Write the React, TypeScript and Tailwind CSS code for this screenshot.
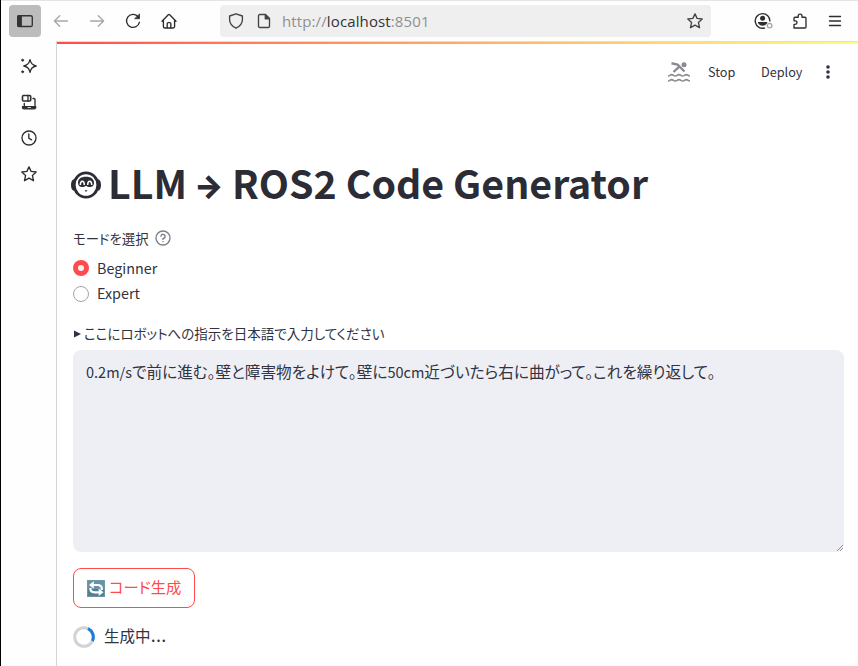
import type { ReactNode } from "react";

const JP = "font-['Noto_Sans_CJK_JP',sans-serif]";

function Icon({ size = 16, className = "", children }: { size?: number; className?: string; children: ReactNode }) {
  return (
    <svg
      width={size}
      height={size}
      viewBox={`0 0 ${size} ${size}`}
      fill="none"
      stroke="currentColor"
      strokeWidth={1.35}
      strokeLinecap="round"
      strokeLinejoin="round"
      className={`block shrink-0 ${className}`}
    >
      {children}
    </svg>
  );
}

const STAR = "M8 .9 L10.1 5.4 L15.2 6 L11.4 9.4 L12.5 14.7 L8 12.2 L3.5 14.7 L4.6 9.4 L.8 6 L5.9 5.4 Z";

function Toolbar() {
  return (
    <header className="flex h-[41px] shrink-0 items-center border-t border-[#e4e4e4] bg-[#fefefe] pl-2 text-[#2e2e2e]">
      <div className="flex h-8 w-8 items-center justify-center rounded-[4px] bg-[#bcbcbc]">
        <Icon className="text-[#333]">
          <rect x=".7" y="2.7" width="14.6" height="10.8" rx="1.6" />
          <path d="M1 3h3.200v10.200H1z" fill="currentColor" />
        </Icon>
      </div>
      <Icon className="ml-3 text-[#a8a8a8]"><path d="M14.400 8H1.500M6.700 2.700L1.400 8l5.300 5.300" /></Icon>
      <Icon className="ml-5 text-[#a8a8a8]"><path d="M1.600 8h12.900M9.300 2.700L14.600 8l-5.300 5.300" /></Icon>
      <Icon className="ml-5">
        <path d="M14.400 9.300A6.500 6.500 0 1 1 12.700 3.300" />
        <path d="M14.500 1.300v4.400H10z" fill="currentColor" strokeWidth=".8" />
      </Icon>
      <Icon className="ml-5">
        <path d="M1 8.200L7.300 1.700a1 1 0 0 1 1.400 0L15 8.200M2.400 7v6.500a1.500 1.500 0 0 0 1.500 1.500h8.200a1.500 1.500 0 0 0 1.500-1.500V7" />
        <path d="M6.200 14.800V10.600a1 1 0 0 1 1-1h1.600a1 1 0 0 1 1 1v4.200" />
      </Icon>
      <div className="ml-[43px] flex h-8 w-[491px] items-center rounded-[4px] bg-[#efefef] pl-2 pr-2 text-[#444]">
        <Icon><path d="M8 .8L14.400 3v3.800c0 3.700-2 6.300-6.400 8.400-4.400-2.100-6.400-4.700-6.400-8.400V3z" /></Icon>
        <Icon className="ml-3">
          <path d="M3.800 1.500h5.700l4 4v7.700a1.300 1.300 0 0 1-1.300 1.300H3.800a1.300 1.300 0 0 1-1.300-1.300V2.800a1.300 1.300 0 0 1 1.300-1.300z" />
          <path d="M9.300 1.700v4h4z" fill="currentColor" />
        </Icon>
        <div className="-mt-px ml-[10px] w-[148px] whitespace-nowrap font-['Open_Sans',sans-serif] text-[15px] leading-[20px] tracking-[0.12px] text-[#909090]">
          http://<span className="text-[#333]">localhost</span>:8501
        </div>
        <Icon className="ml-auto"><path d={STAR} /></Icon>
      </div>
      <svg width="19" height="18" viewBox="0 0 19 18" fill="none" stroke="#2e2e2e" strokeWidth="1.4" className="ml-[43px] block shrink-0">
        <path d="M11 15.800A7.300 7.300 0 1 1 15.800 9.500" />
        <circle cx="8.600" cy="6.300" r="2.500" fill="#2e2e2e" stroke="none" />
        <path d="M3.800 10h9.600c-.5 2.600-2.600 3.800-4.800 3.800S4.300 12.600 3.800 10z" fill="#2e2e2e" stroke="none" />
        <circle cx="15.600" cy="13.600" r="2.300" stroke="#a5a5a5" fill="#fefefe" strokeWidth="1.300" />
      </svg>
      <Icon className="ml-[19px]">
        <path d="M2 15V11.400h1.200a1.800 1.800 0 0 0 0-3.600H2V5.200a1 1 0 0 1 1-1h3.200V3a1.900 1.900 0 0 1 3.800 0v1.200h3a1 1 0 0 1 1 1V14a1 1 0 0 1-1 1z" />
      </Icon>
      <Icon className="ml-[19px]"><path d="M2.500 3.500h11M2.500 8h11M2.500 12.500h11" /></Icon>
    </header>
  );
}

function Sidebar() {
  return (
    <aside className="flex w-[56px] shrink-0 flex-col items-center gap-5 border-r border-[#d5d5d5] bg-[#fefefe] pt-[17px] text-[#2e2e2e]">
      <Icon>
        <path d="M9 1.700C9.700 5.500 11 7.300 15.200 8 11 8.700 9.700 10.500 9 14.300 8.300 10.500 7 8.700 2.800 8 7 7.300 8.300 5.500 9 1.700z" />
        <circle cx="1.600" cy="2.200" r="1" fill="currentColor" strokeWidth=".8" />
        <circle cx="1.600" cy="13.800" r="1" fill="currentColor" strokeWidth=".8" />
      </Icon>
      <Icon>
        <rect x="1.500" y="1.500" width="8.200" height="5.500" rx="1" strokeWidth="1.600" />
        <path d="M7 1.500V7M12 4.500h1a1 1 0 0 1 1 1v6M3.300 9.500v2" />
        <path d="M1.500 12.600h13.200v.7a1.500 1.500 0 0 1-1.500 1.500H3a1.500 1.500 0 0 1-1.500-1.500z" fill="currentColor" />
        <path d="M7 13.500h2.500" stroke="#fff" strokeWidth=".8" />
      </Icon>
      <Icon><circle cx="8" cy="8" r="7" /><path d="M7.800 4v4.200l2.800 1.600" /></Icon>
      <Icon><path d={STAR} /></Icon>
    </aside>
  );
}

function Swimmer() {
  return (
    <svg width="24" height="24" viewBox="0 0 24 24" fill="none" stroke="#8a8b90" strokeWidth="1.700" className="block">
      <circle cx="17" cy="4.700" r="2.500" fill="#8a8b90" stroke="none" />
      <path d="M4.500 3.300L10.500 4.500 17.500 11.500M12 6.800L6.500 12" strokeWidth="2.400" />
      <path d="M1 16c1.900 0 1.900-1.300 3.700-1.300S6.500 16 8.300 16s1.900-1.300 3.700-1.300 1.900 1.300 3.700 1.300 1.900-1.300 3.700-1.300S21.200 16 23 16" />
      <path d="M1 21c1.900 0 1.900-1.300 3.700-1.300S6.500 21 8.300 21s1.900-1.300 3.700-1.300 1.900 1.300 3.700 1.300 1.900-1.300 3.700-1.300S21.200 21 23 21" />
    </svg>
  );
}

function Robot() {
  return (
    <svg width="30" height="28" viewBox="0 0 30 28" className="block shrink-0">
      <path d="M3.500 8C.8 8.600 0 11 0 14s.8 5.400 3.500 6zM26.500 8c2.700.6 3.500 3 3.500 6s-.8 5.400-3.500 6z" fill="#2b2c36" />
      <ellipse cx="15" cy="14" rx="11.800" ry="12.200" fill="#fff" stroke="#2b2c36" strokeWidth="2.800" />
      <path d="M7 11.800C7 7.800 10 5.700 15 5.700s8 2.100 8 6.100c0 5.200-5.500 4.800-8 3-2.500 1.800-8 2.200-8-3z" fill="#2b2c36" />
      <path d="M9.300 14c0-5 4-5 4 0M16.700 14c0-5 4-5 4 0" fill="none" stroke="#fff" strokeWidth="1.500" />
      <path d="M13.500 19.300h3L15 21z" fill="#2b2c36" />
    </svg>
  );
}

function Refresh() {
  return (
    <svg width="18" height="17" viewBox="0 0 18 17" className="block shrink-0">
      <rect width="18" height="17" rx="1" fill="#6693a7" />
      <rect y="9" width="18" height="8" rx="1" fill="#547f93" />
      <rect x=".5" y=".5" width="17" height="16" fill="none" stroke="#7299aa" strokeWidth=".8" />
      <g fill="none" stroke="#fff" strokeWidth="2.200">
        <path d="M6 5h4.500q4.300 0 4.300 3.800V10" />
        <path d="M12 12.300H7.700q-4.300 0-4.300-3.800V8" />
      </g>
      <path d="M2 5l4.800-3.800v7.600zM16.500 12.300l-4.800-3.800v7.600z" fill="#fff" />
    </svg>
  );
}

function App() {
  return (
    <div className={`flex h-[666px] w-[858px] flex-col overflow-hidden border-l border-black bg-white text-[#31333f] ${JP}`}>
      <Toolbar />
      <div className="flex min-h-0 flex-1">
        <Sidebar />
        <main className="flex min-w-0 flex-1 flex-col border-t border-[#dedede]">
          <div className="h-[2px] shrink-0 bg-gradient-to-r from-[#ff4b4b] to-[#fffd80]" />
          <div className="flex h-[56px] items-center justify-end whitespace-nowrap pr-[28px] text-[12.700px]">
            <Swimmer />
            <span className="ml-[17px] w-[27px]">Stop</span>
            <span className="ml-[26px] w-[42px]">Deploy</span>
            <svg width="4" height="14" viewBox="0 0 4 14" className="ml-[23px] block" fill="#31333f">
              <circle cx="2" cy="2" r="1.800" /><circle cx="2" cy="7" r="1.800" /><circle cx="2" cy="12" r="1.800" />
            </svg>
          </div>
          <div className="flex flex-col pl-4 pr-[14px]">
            <h1 className="-ml-[2px] mt-[57px] flex h-[56px] items-center whitespace-nowrap text-[39.300px] font-bold leading-[56px] text-[#2b2c36]">
              <Robot />
              <span className="-mt-[6px] ml-[7px] w-[86px]">LLM</span>
              <span className="mt-[2px] w-[38px] font-['Inter',sans-serif] text-[31px] font-black">→</span>
              <span className="-mt-[6px]">ROS2 Code Generator</span>
            </h1>
            <div className="mt-[13px] flex h-[24px] items-center text-[13.400px] leading-[24px] [font-feature-settings:'palt']">
              <span className="w-[82px] whitespace-nowrap">モードを選択</span>
              <Icon className="text-[#7d7e87]">
                <circle cx="8" cy="8" r="7" />
                <path d="M5.900 6.200A2.100 2.100 0 1 1 8 8.500v.9M8 11.600v.1" />
              </Icon>
            </div>
            <label className="mt-[5px] flex h-[26px] items-center gap-2 text-[14.350px]">
              <span className="flex h-4 w-4 items-center justify-center rounded-full bg-[#ff4b4b]"><span className="h-[6px] w-[6px] rounded-full bg-[#f0f2f6]" /></span>
              Beginner
            </label>
            <label className="flex h-[25px] items-center gap-2 text-[14.350px]">
              <span className="h-4 w-4 rounded-full border border-[#a3a4aa]" />
              <span className="-mt-px">Expert</span>
            </label>
            <div className="mt-[15px] flex h-[24px] items-center whitespace-nowrap text-[13.500px] [font-feature-settings:'palt']">
              <svg width="8" height="8" viewBox="0 0 8 8" className="mr-[3px] mt-px"><path d="M1 .5l7 3.500-7 3.500z" fill="#31333f" /></svg>
              ここにロボットへの指示を日本語で入力してください
            </div>
            <div className="relative mt-[5px] h-[202px] rounded-lg bg-[#eeeff5] px-[13px] pt-[10px]">
              <p className="whitespace-nowrap text-[15.640px] leading-[24px] [font-feature-settings:'palt']">
                <span className="text-[14.500px]">0.2m/s</span>で前に進む。壁と障害物をよけて。壁に<span className="text-[14.500px]">50cm</span>近づいたら右に曲がって。これを繰り返して。
              </p>
              <svg width="6" height="6" viewBox="0 0 6 6" className="absolute bottom-[1px] right-[1px]" stroke="#8b8d96"><path d="M0 6L6 0M3 6L6 3" /></svg>
            </div>
            <button className="mt-4 flex h-10 w-[122px] items-center gap-[4px] whitespace-nowrap rounded-lg border border-[#ff4b4b] pl-[13px] text-[15.300px] text-[#ff4b4b] [font-feature-settings:'palt']">
              <Refresh />
              <span className="-mt-[4px]">コード生成</span>
            </button>
            <div className="mt-[16px] flex h-[26px] items-center gap-[9px] text-[15.500px] [font-feature-settings:'palt']">
              <svg width="22" height="22" viewBox="0 0 22 22" fill="none" strokeWidth="3" className="block">
                <circle cx="11" cy="11" r="9.300" stroke="#d2d3d6" />
                <path d="M15 2.600A9.300 9.300 0 0 1 19.400 15" stroke="#1c7cd9" />
              </svg>
              <span className="-mt-[2px]">生成中<span className="font-['Open_Sans',sans-serif] text-[20.500px] leading-none">…</span></span>
            </div>
          </div>
        </main>
      </div>
    </div>
  );
}

export default App;
